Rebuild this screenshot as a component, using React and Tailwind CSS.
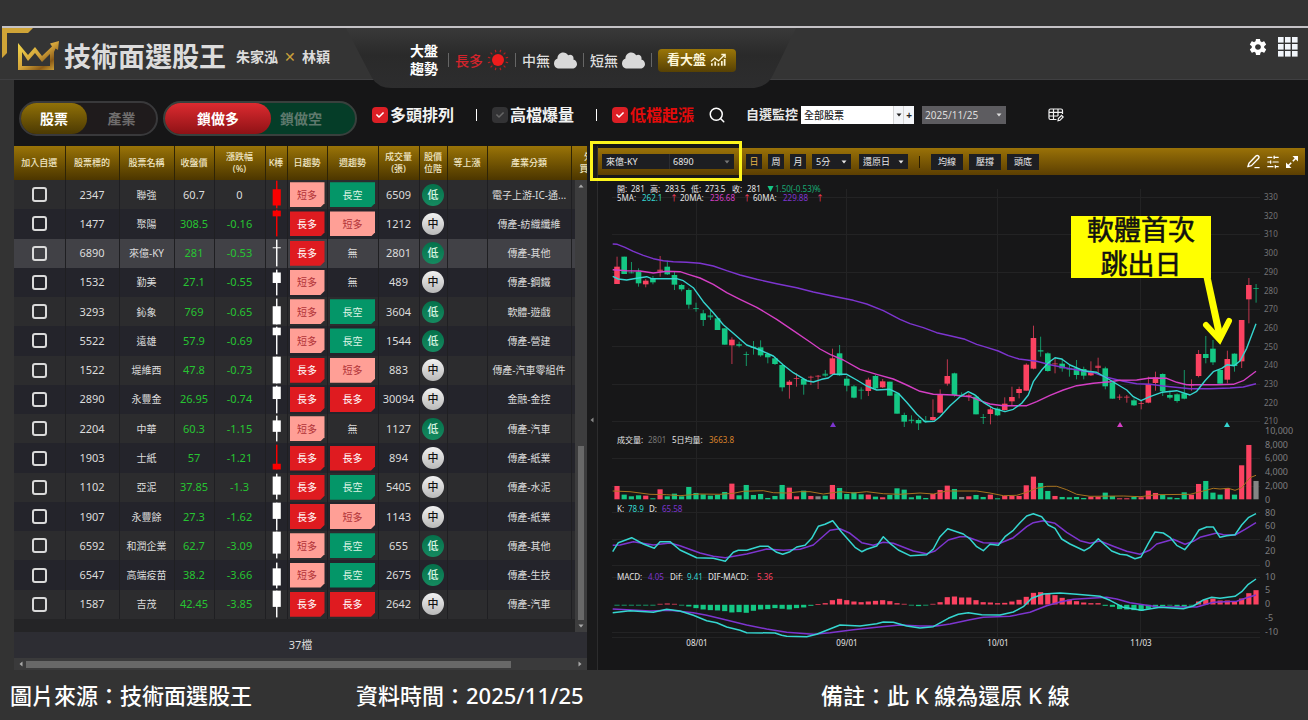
import React, { useState } from 'react';
import clsx from 'clsx';
import { FaCloud, FaCheck } from 'react-icons/fa';
import { IoMdSettings } from 'react-icons/io';
import { LuSearch, LuSlidersHorizontal } from 'react-icons/lu';

const columns = [
  { label: ['加入自選'], width: 51 },
  { label: ['股票標的'], width: 54 },
  { label: ['股票名稱'], width: 55 },
  { label: ['收盤價'], width: 40 },
  { label: ['漲跌幅', '(%)'], width: 51 },
  { label: ['K棒'], width: 22 },
  { label: ['日趨勢'], width: 40 },
  { label: ['週趨勢'], width: 51 },
  { label: ['成交量', '(張)'], width: 41 },
  { label: ['股價', '位階'], width: 28 },
  { label: ['等上漲'], width: 40 },
  { label: ['產業分類'], width: 84 },
  { label: ['外資', '買賣超'], width: 44 },
];

// candle: [body top, body height, wick top, wick bottom] inside a 22x29 cell
const stocks = [
  { id: '2347', name: '聯強', price: '60.7', change: '0', candle: [9, 17, 0, 29], up: true, day: '短多', week: '長空', volume: 6509, level: '低', industry: '電子上游-IC-通...' },
  { id: '1477', name: '聚陽', price: '308.5', change: '-0.16', candle: [1, 6, 0, 28], up: true, day: '長多', week: '短多', volume: 1212, level: '中', industry: '傳產-紡織纖維' },
  { id: '6890', name: '來億-KY', price: '281', change: '-0.53', candle: [8, 1, 0, 28], day: '長多', week: '無', volume: 2801, level: '低', industry: '傳產-其他', selected: true },
  { id: '1532', name: '勤美', price: '27.1', change: '-0.55', candle: [4, 11, 1, 28], day: '短多', week: '無', volume: 489, level: '中', industry: '傳產-鋼鐵' },
  { id: '3293', name: '鈊象', price: '769', change: '-0.65', candle: [9, 19, 1, 28], day: '短多', week: '長空', volume: 3604, level: '低', industry: '軟體-遊戲' },
  { id: '5522', name: '遠雄', price: '57.9', change: '-0.69', candle: [1, 8, 0, 29], day: '短多', week: '長空', volume: 1544, level: '低', industry: '傳產-營建' },
  { id: '1522', name: '堤維西', price: '47.8', change: '-0.73', candle: [0, 28, 0, 28], day: '長多', week: '短多', volume: 883, level: '中', industry: '傳產-汽車零組件' },
  { id: '2890', name: '永豐金', price: '26.95', change: '-0.74', candle: [1, 13, 0, 29], day: '長多', week: '長多', volume: 30094, level: '中', industry: '金融-金控' },
  { id: '2204', name: '中華', price: '60.3', change: '-1.15', candle: [6, 12, 1, 28], day: '短多', week: '無', volume: 1127, level: '低', industry: '傳產-汽車' },
  { id: '1903', name: '士紙', price: '57', change: '-1.21', candle: [20, 6, 0, 26], up: true, day: '長多', week: '長多', volume: 894, level: '中', industry: '傳產-紙業' },
  { id: '1102', name: '亞泥', price: '37.85', change: '-1.3', candle: [3, 19, 0, 27], day: '長多', week: '長空', volume: 5405, level: '中', industry: '傳產-水泥' },
  { id: '1907', name: '永豐餘', price: '27.3', change: '-1.62', candle: [0, 17, 0, 29], day: '長多', week: '短多', volume: 1143, level: '中', industry: '傳產-紙業' },
  { id: '6592', name: '和潤企業', price: '62.7', change: '-3.09', candle: [0, 23, 0, 28], day: '短多', week: '長空', volume: 655, level: '低', industry: '傳產-其他' },
  { id: '6547', name: '高端疫苗', price: '38.2', change: '-3.66', candle: [7, 18, 1, 28], day: '短多', week: '長空', volume: 2675, level: '低', industry: '傳產-生技' },
  { id: '1587', name: '吉茂', price: '42.45', change: '-3.85', candle: [0, 17, 0, 28], day: '長多', week: '長多', volume: 2642, level: '中', industry: '傳產-汽車' },
];

// all chart series are kept on a grid of one third of a chart unit
// daily candles: [up, body top, body bottom, wick top, wick bottom]
const candles = [
  [1, 110, 162, 80, 162], [0, 80, 132, 80, 132], [0, 127, 129, 96, 130], [0, 125, 160, 115, 170], [1, 152, 163, 147, 172],
  [0, 144, 157, 138, 163], [1, 119, 125, 78, 140], [0, 110, 133, 92, 135], [0, 135, 164, 125, 180], [0, 165, 178, 162, 184],
  [0, 180, 224, 175, 236], [0, 234, 237, 218, 245], [0, 250, 270, 240, 288], [0, 256, 262, 240, 270], [0, 265, 300, 265, 300],
  [0, 295, 344, 295, 344], [1, 329, 346, 322, 402], [0, 342, 348, 335, 352], [0, 372, 375, 365, 408], [0, 350, 354, 333, 374],
  [0, 352, 376, 331, 380], [0, 372, 382, 368, 400], [0, 385, 402, 380, 405], [0, 405, 472, 405, 484], [1, 455, 465, 450, 506],
  [1, 444, 446, 430, 470], [0, 447, 464, 445, 494], [1, 440, 443, 437, 465], [1, 437, 439, 435, 477], [0, 431, 437, 420, 440],
  [1, 385, 433, 356, 435], [0, 370, 436, 345, 438], [0, 446, 467, 438, 484], [0, 469, 503, 465, 505], [0, 479, 481, 472, 508],
  [1, 449, 483, 443, 498], [0, 438, 475, 435, 478], [1, 454, 472, 447, 474], [0, 455, 497, 455, 497], [0, 490, 551, 490, 551],
  [0, 555, 575, 548, 591], [0, 569, 573, 556, 580], [0, 570, 580, 565, 600], [0, 572, 574, 558, 578], [1, 561, 570, 508, 574],
  [1, 494, 548, 478, 550], [1, 438, 461, 388, 467], [0, 430, 495, 428, 500], [0, 494, 496, 487, 500], [1, 495, 497, 490, 513],
  [0, 500, 553, 495, 553], [0, 561, 563, 552, 582], [1, 538, 552, 530, 583], [0, 536, 556, 532, 558], [1, 521, 540, 502, 542],
  [1, 501, 514, 470, 527], [1, 477, 489, 470, 505], [1, 404, 482, 400, 482], [1, 324, 416, 287, 418], [0, 360, 365, 320, 380],
  [0, 370, 423, 367, 425], [1, 400, 403, 385, 430], [0, 401, 415, 385, 425], [0, 415, 419, 405, 440], [0, 415, 435, 390, 448],
  [0, 417, 437, 410, 448], [1, 424, 436, 394, 438], [1, 407, 414, 383, 430], [0, 415, 469, 410, 478], [0, 457, 506, 457, 506],
  [1, 500, 503, 493, 510], [1, 500, 503, 495, 518], [0, 511, 526, 505, 528], [1, 519, 522, 512, 538], [1, 462, 518, 440, 520],
  [1, 442, 459, 425, 482], [0, 432, 484, 430, 498], [0, 495, 503, 482, 508], [0, 493, 513, 490, 518], [0, 490, 506, 420, 508],
  [1, 463, 467, 448, 482], [1, 372, 438, 360, 442], [0, 372, 384, 318, 400], [0, 356, 397, 330, 405], [0, 420, 461, 420, 461],
  [1, 387, 449, 362, 460], [0, 371, 408, 370, 425], [1, 270, 394, 270, 414], [1, 165, 208, 144, 280], [0, 174, 177, 162, 218],
];

const volumes = [
  40, 14, 9, 12, 11, 3, 30, 9, 17, 9, 37, 19, 15, 11, 13, 22, 47, 12, 43, 13, 16, 4, 10, 43, 35, 9, 26, 10, 9, 11,
  43, 34, 16, 21, 15, 14, 8, 6, 13, 33, 29, 6, 11, 4, 16, 28, 41, 31, 7, 9, 13, 7, 14, 3, 10, 10, 10, 42, 68, 49,
  25, 10, 7, 6, 7, 4, 8, 8, 20, 10, 3, 3, 7, 6, 26, 19, 13, 6, 4, 21, 14, 46, 55, 20, 14, 34, 14, 102, 163, 55,
];

const macdBars = [
  -2, -2, -1, -2, -2, -1, 2, 3, 2, -2, -5, -10, -14, -16, -17, -19, -23, -22, -24, -18, -14, -13, -10, -12, -14, -10, -8, -3, 1, 4,
  13, 17, 13, 9, 7, 9, 11, 13, 10, 4, 2, -2, -4, -1, 2, 7, 22, 24, 21, 21, 13, 7, 6, 4, 5, 9, 14, 23, 35, 37,
  32, 28, 20, 15, 10, 6, 4, 4, -3, -6, -13, -14, -16, -18, -12, -8, -4, -2, -6, -6, -2, 9, 15, 18, 12, 12, 10, 18, 34, 43,
];

const series = {
  ma60: '38,42 52,43 75,52 100,64 130,76 160,86 190,92 220,95 260,97 300,100 340,108 380,122 420,135 470,148 530,161 590,173 640,186 700,199 760,211 800,222 850,242 900,268 930,281 970,293 1010,308 1050,317 1095,328 1130,343 1160,352 1195,363 1225,377 1257,387 1310,394 1350,404 1410,416 1450,423 1480,428 1520,442 1570,454 1610,461 1650,463 1690,468 1770,476 1830,476 1890,474 1930,471 1968,461',
  ma20: '38,119 80,122 120,123 160,129 200,124 240,125 265,133 300,144 340,163 380,188 420,208 470,232 530,268 580,302 630,336 660,357 690,373 730,390 780,418 830,433 880,447 920,465 960,484 1000,493 1060,495 1080,497 1110,500 1140,512 1170,522 1210,527 1280,527 1310,515 1350,496 1390,480 1430,467 1480,460 1530,455 1560,451 1610,450 1650,444 1700,445 1730,457 1760,464 1850,464 1900,463 1930,452 1968,424',
  ma5: '38,139 55,147 80,150 110,145 140,140 155,146 190,146 230,146 250,152 280,173 310,215 340,248 370,284 400,310 440,345 480,360 520,378 550,405 580,428 620,452 640,456 665,448 685,444 700,433 740,433 770,450 800,468 830,480 870,478 895,490 920,517 950,552 975,575 1003,574 1020,560 1050,527 1080,500 1105,485 1125,495 1150,517 1180,535 1215,545 1240,538 1265,520 1285,495 1300,455 1325,420 1345,398 1365,383 1385,387 1410,405 1450,422 1490,427 1520,444 1550,462 1580,480 1600,500 1623,512 1650,500 1685,487 1730,482 1770,495 1790,484 1815,452 1840,425 1865,415 1882,404 1902,407 1920,393 1940,355 1968,281',
  volMa: '38,198 90,200 150,208 200,209 240,212 300,207 360,208 400,205 430,199 490,197 520,203 560,204 600,200 630,200 670,207 720,200 760,204 800,200 850,206 900,208 960,204 1000,207 1040,198 1130,198 1170,204 1210,212 1250,211 1280,202 1310,190 1340,184 1370,184 1400,194 1430,208 1470,214 1570,213 1620,215 1670,209 1770,208 1810,198 1840,190 1860,192 1885,190 1905,196 1925,188 1950,158 1968,151',
  k: '38,380 55,353 95,338 130,357 163,370 180,350 210,350 240,375 290,398 340,400 376,409 400,382 415,376 440,376 480,364 505,364 530,382 548,388 570,380 590,366 615,361 635,340 655,304 675,298 698,287 725,322 765,367 785,380 800,373 830,363 850,335 870,355 895,375 930,392 980,389 1000,372 1020,335 1043,311 1090,327 1110,342 1130,365 1150,377 1170,358 1195,361 1215,335 1240,316 1260,293 1280,273 1300,266 1325,275 1345,300 1365,310 1385,342 1410,357 1453,377 1470,367 1495,341 1515,360 1535,378 1560,388 1580,390 1605,401 1623,396 1645,355 1665,321 1690,324 1710,337 1730,361 1754,374 1775,349 1797,315 1820,306 1840,306 1860,337 1880,332 1905,329 1925,300 1945,278 1968,266',
  d: '38,361 60,360 100,350 160,360 210,354 240,362 300,384 340,394 376,398 440,387 500,372 550,376 600,373 640,360 690,316 720,311 750,325 785,353 820,361 850,352 880,355 940,378 980,386 1005,378 1045,345 1080,335 1100,335 1150,353 1200,355 1240,338 1280,305 1300,293 1330,287 1365,295 1400,322 1440,347 1470,355 1500,348 1540,364 1580,379 1620,388 1650,375 1670,357 1720,343 1755,358 1780,349 1800,337 1850,324 1870,329 1905,330 1935,313 1968,293',
  dif: '38,563 90,557 160,562 200,553 240,558 280,571 320,587 350,593 380,606 420,616 440,623 525,624 545,631 560,634 620,635 650,628 680,616 720,600 780,603 830,596 850,591 880,592 920,603 960,609 1000,605 1045,580 1075,568 1105,563 1145,569 1200,570 1240,561 1270,545 1295,520 1330,507 1380,504 1430,508 1500,514 1530,526 1570,547 1625,556 1680,547 1750,551 1780,543 1810,525 1835,517 1860,520 1905,514 1925,500 1945,478 1968,462',
  macd: '38,552 150,558 210,556 280,563 320,571 370,583 440,600 500,612 560,622 640,628 690,623 760,614 830,607 900,600 960,603 1010,603 1050,597 1110,584 1150,577 1230,574 1290,562 1340,542 1380,531 1420,523 1520,517 1550,522 1590,533 1670,545 1790,546 1840,532 1910,529 1940,518 1968,510',
};

const scaleX = (v) => 2 + v / 3;
const priceY = (v) => 55 + v / 3;
const lowerY = (v) => 250 + v / 3;
const candleX = (i) => 19 + i * 7.18;

const toPoints = (text, scaleY) =>
  text
    .split(' ')
    .map((pair) => {
      const [x, y] = pair.split(',').map(Number);
      return `${scaleX(x).toFixed(1)},${scaleY(y).toFixed(1)}`;
    })
    .join(' ');

const RED = '#fb4261';
const GREEN = '#14c784';
const CYAN = '#35d6d0';
const PURPLE = '#7d35cf';
const PINK = '#d43fc4';

const axisLabels = [
  ...Array.from({ length: 13 }, (_, i) => [330 - i * 10, 22 + i * 18.7]),
  ['10,000', 256], ['8,000', 270], ['6,000', 283], ['4,000', 297], ['2,000', 311], ['0', 325],
  ['80', 338], ['60', 351], ['40', 364], ['20', 376], ['0', 389],
  ['10', 402], ['5', 415], ['0', 429], ['-5', 443], ['-10', 457],
];

const gridLines = [22, 59, 97, 134, 171, 209, 246, 283, 311, 337, 364, 390, 402, 457, 462];

function Crown() {
  return (
    <svg viewBox="0 0 42 32" className="h-8 w-[42px]" aria-hidden="true">
      <defs>
        <linearGradient id="crown" x1="0" y1="0" x2="1" y2="1">
          <stop offset="0" stopColor="#f5dc4e" />
          <stop offset="0.5" stopColor="#d3a33a" />
          <stop offset="0.75" stopColor="#8a5a17" />
          <stop offset="1" stopColor="#e0b43f" />
        </linearGradient>
      </defs>
      <path d="M0 2L10 14L17 6L24 15L34 5.500L32 2.500L41 0L40 9L37.500 7.500L36 11V29H0Z M4 11V25H32V13L24 21L17 12L10 20Z" fill="url(#crown)" fillRule="evenodd" />
    </svg>
  );
}

function Sun() {
  return (
    <svg viewBox="0 0 22 22" className="h-[22px] w-[22px]" aria-hidden="true">
      <circle cx="11" cy="11" r="6" fill="#ee1c1c" />
      {Array.from({ length: 12 }, (_, i) => (
        <path key={i} d="M11 0.5V3" stroke="#b32020" strokeWidth="1.2" transform={`rotate(${i * 30 + 15} 11 11)`} />
      ))}
    </svg>
  );
}

function TrendIcon() {
  return (
    <svg viewBox="0 0 18 14" className="h-3.5 w-[17px]" fill="none" stroke="#fdf6d8" aria-hidden="true">
      <path d="M1 8.5L5 5L9 8L15.5 1.5M12 1.2H16V5" strokeWidth="1.4" />
      <path d="M2 13V10.5M5.5 13V8.5M9 13V10.5M12.5 13V8M15.5 13V6" strokeWidth="1.8" />
    </svg>
  );
}

function TableEditIcon() {
  return (
    <svg viewBox="0 0 16 14" className="h-3.5 w-4" fill="none" stroke="#f2f2f2" strokeWidth="1.2" aria-hidden="true">
      <path d="M8.5 11.5H2.5A1.5 1.5 0 0 1 1 10V2.5A1.5 1.5 0 0 1 2.5 1H13A1.5 1.5 0 0 1 14.500 2.500V6M1 4.300H14.500M1 8H10M5.500 1V11.500M10 1V8" />
      <path d="M10 12.800L10.400 10.600L13.600 7.400L15.200 9L12 12.300Z" />
    </svg>
  );
}

function PenIcon() {
  return (
    <svg viewBox="0 0 16 16" className="h-[15px] w-[15px]" fill="none" stroke="#fff" strokeWidth="1.5" strokeLinejoin="round" aria-hidden="true">
      <path d="M2 13.500L3.200 9.800L10.600 2.200Q12 1 13.300 2.200Q14.500 3.500 13.300 4.800L5.800 12.400Z" />
      <path d="M9 14.500H14.500" strokeWidth="1.300" />
    </svg>
  );
}

function ExpandIcon() {
  return (
    <svg viewBox="0 0 14 14" className="h-3.5 w-3.5" aria-hidden="true">
      <path d="M2 12L12 2" stroke="#fff" strokeWidth="1.600" strokeDasharray="6 2.200" />
      <path d="M13 1V6.500L7.500 1ZM1 13V7.500L6.500 13Z" fill="#fff" />
    </svg>
  );
}

function Caret({ className }) {
  return (
    <svg viewBox="0 0 6 4" className={clsx('pointer-events-none h-1 w-1.5', className)} aria-hidden="true">
      <path d="M0.500 0.500H5.500L3 3.500Z" fill="currentColor" />
    </svg>
  );
}

function MarketTrend() {
  return (
    <section className="relative z-10 flex h-[60px] w-[450px] items-center pt-1 pl-16 text-[14px] font-medium text-white">
      <svg viewBox="0 0 450 60" preserveAspectRatio="none" className="absolute inset-0 -z-10 h-full w-full" aria-hidden="true">
        <defs>
          <linearGradient id="hang" x1="0" y1="0" x2="0" y2="1">
            <stop offset="0" stopColor="#393939" />
            <stop offset="0.45" stopColor="#2a2a2a" />
            <stop offset="1" stopColor="#2d2d2e" />
          </linearGradient>
        </defs>
        <path d="M0 0H450L427 47Q421 60 404 60H46Q32 60 26 50Z" fill="url(#hang)" />
      </svg>
      <h2 className="text-[14px] leading-[18px] font-bold">大盤<br />趨勢</h2>
      <i className="mr-1.5 ml-2.5 h-3.5 w-px bg-[#666]" />
      <span className="text-[#d3242c]">長多</span>
      <span className="ml-1"><Sun /></span>
      <i className="mx-1.5 h-3.5 w-px bg-[#666]" />
      <span className="text-[#ddd]">中無</span>
      <FaCloud className="ml-1 h-[23px] w-[23px] text-[#d9d9d9]" />
      <i className="mx-1.5 h-3.5 w-px bg-[#666]" />
      <span className="text-[#ddd]">短無</span>
      <FaCloud className="ml-1 h-[23px] w-[23px] text-[#d9d9d9]" />
      <i className="mx-1.5 h-3.5 w-px bg-[#666]" />
      <button type="button" className="flex h-[23px] w-[78px] items-center justify-center gap-1 rounded bg-gradient-to-b from-[#9a7608] to-[#574104] text-[13px] font-bold text-[#fdf6d8]">
        看大盤 <TrendIcon />
      </button>
    </section>
  );
}

function Header() {
  return (
    <header className="relative flex h-[52px] items-start border-b border-[#3f3f41] bg-[#343434]">
      <svg viewBox="0 0 32 32" className="absolute top-0 left-0.5 h-8 w-8" aria-hidden="true">
        <path d="M0 0H31L26 5H5V25L0 30Z" fill="#cfa437" />
      </svg>
      <div className="flex h-full w-[346px] shrink-0 items-center pt-1.5 pl-[18px]">
        <Crown />
        <h1 className="ml-1 text-[27px] leading-8 font-bold whitespace-nowrap text-[#dcdcdc]">技術面選股王</h1>
        <p className="ml-2.5 flex gap-1.5 text-[14px] font-bold whitespace-nowrap text-[#dcdcdc]">
          朱家泓 <span className="font-normal text-[#c9a03a]">✕</span> 林穎
        </p>
      </div>
      <MarketTrend />
      <div className="ml-auto flex gap-2.5 pt-[9px] pr-2.5">
        <button type="button" aria-label="設定"><IoMdSettings className="h-5 w-5 text-white" /></button>
        <button type="button" aria-label="選單">
          <svg viewBox="0 0 20 20" className="h-5 w-5" fill="#f1f5fa" aria-hidden="true">
            {[0, 7, 14].map((y) => [0, 7, 14].map((x) => <rect key={`${x}-${y}`} x={x} y={y} width="5.600" height="5.600" />))}
          </svg>
        </button>
      </div>
    </header>
  );
}

function FilterCheck({ id, label, checked, onChange, disabled, highlight }) {
  return (
    <div className="flex items-center gap-0.5">
      <span className="grid">
        <input
          id={id}
          type="checkbox"
          checked={checked}
          onChange={onChange}
          className={clsx('col-start-1 row-start-1 h-4 w-4 appearance-none rounded-sm', disabled ? 'bg-[#333335]' : 'bg-[#dc1f25]')}
        />
        <FaCheck className={clsx('pointer-events-none col-start-1 row-start-1 h-2 w-2 place-self-center', disabled ? 'text-[#666]' : 'text-white', !checked && 'hidden')} />
      </span>
      <label htmlFor={id} className={clsx('text-[16px] leading-5 font-bold whitespace-nowrap', highlight ? 'text-[#e30b0b]' : 'text-[#f2f2f2]')}>
        {label}
      </label>
    </div>
  );
}

function Toolbar() {
  const [filters, setFilters] = useState({ bull: true, burst: true, low: true });
  const toggle = (key) => setFilters((prev) => ({ ...prev, [key]: !prev[key] }));

  return (
    <div className="flex h-[66px] items-start pt-[21px] pl-[5px]">
      <div className="flex h-[35px] w-[139px] rounded-full border-2 border-[#39393b] bg-[#1f1b1c] text-[14px] font-bold">
        <button type="button" className="h-full w-[66px] rounded-full bg-gradient-to-b from-[#917108] to-[#4c3a03] text-white">股票</button>
        <button type="button" className="flex-1 text-[#6f6d6d]">產業</button>
      </div>
      <div className="ml-[5px] flex h-[35px] w-[194px] rounded-full border-2 border-[#39403d] bg-[#053d28] text-[14px] font-bold">
        <button type="button" className="h-full w-[106px] rounded-full bg-gradient-to-b from-[#dd2b30] to-[#8f1216] text-white">鎖做多</button>
        <button type="button" className="flex-1 pr-6 text-[#5f796d]">鎖做空</button>
      </div>
      <div className="mt-0.5 ml-[15px] flex h-6 items-center">
        <FilterCheck id="bull" label="多頭排列" checked={filters.bull} onChange={() => toggle('bull')} />
        <i className="mr-[15px] ml-[22px] h-3 w-px bg-white" />
        <FilterCheck id="burst" label="高檔爆量" checked={filters.burst} onChange={() => toggle('burst')} disabled />
        <i className="mr-[15px] ml-[22px] h-3 w-px bg-white" />
        <FilterCheck id="low" label="低檔起漲" checked={filters.low} onChange={() => toggle('low')} highlight />
        <button type="button" aria-label="搜尋" className="ml-3.5"><LuSearch className="h-[18px] w-[18px] text-white" /></button>
        <label htmlFor="watch" className="ml-5 text-[13px] font-bold whitespace-nowrap text-[#e6e6e6]">自選監控</label>
        <div className="ml-[3px] flex h-[18px] items-center bg-white text-[#222]">
          <select id="watch" className="h-full w-[92px] appearance-none px-[3px] text-[10px] leading-3 font-medium text-[#222]">
            <option>全部股票</option>
          </select>
          <span className="flex h-full w-2.5 items-center justify-center border-l border-[#d5d5d5] bg-[#f3f5f8]"><Caret /></span>
          <button type="button" aria-label="新增" className="h-full w-[11px] border-l border-[#d5d5d5] bg-[#f3f5f8] text-[10px] leading-4 font-bold">+</button>
        </div>
        <div className="ml-2 flex h-[18px] w-[84px] items-center bg-[#5d5c60] pr-1 text-[#ddd]">
          <select aria-label="日期" className="h-full flex-1 appearance-none px-[3px] text-[10px] leading-3">
            <option>2025/11/25</option>
          </select>
          <Caret />
        </div>
        <button type="button" aria-label="編輯欄位" className="ml-[42px]"><TableEditIcon /></button>
      </div>
    </div>
  );
}

function TrendTag({ value, wide }) {
  if (value === '無') {
    return <span className="text-[#ddd]">無</span>;
  }
  return (
    <span
      className={clsx(
        'mx-auto flex h-[25px] items-center justify-center text-[10px] [clip-path:polygon(0_0,100%_0,100%_21px,calc(100%-4px)_100%,0_100%)]',
        wide ? 'w-[45px]' : 'w-[35px]',
        {
          'bg-[#df1b20] text-white': value === '長多',
          'bg-[#ff9f96] text-[#b13236]': value === '短多',
          'bg-[#049668] text-[#def3e4]': value === '長空',
        }
      )}
    >
      {value}
    </span>
  );
}

function CandleCell({ candle, up }) {
  const [top, height, wickTop, wickBottom] = candle;
  const color = up ? '#fb0000' : '#fff';
  return (
    <svg viewBox="0 0 22 29" className="block h-[29px] w-full" fill={color} aria-hidden="true">
      <rect x="10.500" y={wickTop} width="1.500" height={wickBottom - wickTop} />
      <rect x="7" y={top} width="8.500" height={height} />
    </svg>
  );
}

function StockTable() {
  return (
    <section className="relative flex min-w-0 flex-col overflow-hidden bg-[#242426]">
      <table className="h-[473px] w-[601px] table-fixed border-collapse text-center text-[10px] leading-3 text-[#dcdcdc]">
        <colgroup>
          {columns.map((col) => <col key={col.label[0]} style={{ width: col.width }} />)}
        </colgroup>
        <thead>
          <tr className="bg-gradient-to-b from-[#9a7408] to-[#4c3600]">
            {columns.map((col) => (
              <th key={col.label[0]} className="h-[34px] border-r border-[#2f2405] p-0 text-[9px] font-medium whitespace-nowrap text-[#f0e6c4]">
                {col.label.map((line) => <span key={line} className="block">{line}</span>)}
              </th>
            ))}
          </tr>
        </thead>
        <tbody>
          {stocks.map((row, index) => (
            <tr key={row.id} className={row.selected ? 'bg-[#414146]' : index % 2 === 0 ? 'bg-[#2c2c2e]' : 'bg-[#24242b]'}>
              <td className="border-r border-[#1f1f22] p-0">
                <input type="checkbox" aria-label={`加入自選 ${row.name}`} className="mx-auto block h-[15px] w-[15px] appearance-none rounded-[3px] border-2 border-[#dadada]" />
              </td>
              <td className="border-r border-[#1f1f22] p-0 text-[11px]">{row.id}</td>
              <td className="border-r border-[#1f1f22] p-0 whitespace-nowrap">{row.name}</td>
              <td className={clsx('border-r border-[#1f1f22] p-0 text-[11px]', row.change !== '0' && 'text-[#27c432]')}>{row.price}</td>
              <td className={clsx('border-r border-[#1f1f22] p-0 text-[11px]', row.change !== '0' && 'text-[#27c432]')}>{row.change}</td>
              <td className="border-r border-[#1f1f22] p-0"><CandleCell candle={row.candle} up={row.up} /></td>
              <td className="border-r border-[#1f1f22] p-0"><TrendTag value={row.day} /></td>
              <td className="border-r border-[#1f1f22] p-0"><TrendTag value={row.week} wide /></td>
              <td className="border-r border-[#1f1f22] p-0 text-[11px]">{row.volume}</td>
              <td className="border-r border-[#1f1f22] p-0">
                <span
                  className={clsx(
                    'mx-auto flex h-[22px] w-[22px] items-center justify-center rounded-full text-[11px] font-medium',
                    row.level === '低' ? 'bg-gradient-to-b from-[#05714b] to-[#158a60] text-[#d9f5e2]' : 'bg-gradient-to-b from-[#f2f2f2] to-[#b9b9b9] text-[#111]'
                  )}
                >
                  {row.level}
                </span>
              </td>
              <td className="border-r border-[#1f1f22] p-0" />
              <td className="border-r border-[#1f1f22] p-0 whitespace-nowrap">{row.industry}</td>
              <td className="p-0" />
            </tr>
          ))}
        </tbody>
      </table>
      <div className="h-[13px]" />
      <p className="flex h-[26px] items-center justify-center bg-[#2d2d33] text-[11px] text-[#ddd]">37檔</p>
      <div className="flex h-3 items-center bg-[#3a3a3b] px-1 text-[#aaa]">
        <Caret className="rotate-90" />
        <span className="ml-0.5 h-[7px] w-[485px] bg-[#686868]" />
        <Caret className="ml-auto -rotate-90" />
      </div>
      {/* vertical scroll bar */}
      <div className="absolute top-[34px] right-0 bottom-[38px] flex w-3 flex-col items-center bg-[#3d3d3e] py-1 text-[#aaa]">
        <Caret className="rotate-180" />
        <span className="mt-auto mb-1 h-[174px] w-1.5 bg-[#686868]" />
        <Caret />
      </div>
    </section>
  );
}

function Chart() {
  return (
    <svg viewBox="0 0 707 492" className="w-full" fontFamily="'Noto Sans', 'Noto Sans CJK TC', sans-serif" role="img" aria-label="來億-KY 還原日 K 線圖">
      <g stroke="#232324">
        {gridLines.map((y) => <path key={y} d={`M14 ${y}.500H662`} />)}
        {[98, 248, 399, 542].map((x) => <path key={x} d={`M${x}.500 14V462`} />)}
      </g>

      <g fill="#737375" fontSize="8">
        {axisLabels.slice(0, 13).map(([label, y]) => <text key={label} x="666" y={y + 3}>{label}</text>)}
      </g>
      <g fill="#7d7d7f" fontSize="9">
        {axisLabels.slice(13).map(([label, y]) => <text key={y} x="667" y={y + 3}>{label}</text>)}
      </g>
      <g fill="#e6e6e6" fontSize="8" textAnchor="middle">
        <text x="99" y="471">08/01</text>
        <text x="249" y="471">09/01</text>
        <text x="400" y="471">10/01</text>
        <text x="543" y="471">11/03</text>
      </g>

      {/* price */}
      {candles.map(([up, top, bottom, high, low], i) => (
        <g key={i} fill={up ? RED : GREEN}>
          <rect x={candleX(i) - 0.4} y={priceY(high)} width="0.9" height={(low - high) / 3} opacity="0.8" />
          <rect x={candleX(i) - 2.8} y={priceY(top)} width="5.6" height={Math.max((bottom - top) / 3, 1)} opacity={bottom - top < 8 ? 0.7 : 1} />
        </g>
      ))}
      <g fill="none" strokeWidth="1.4" strokeLinejoin="round">
        <polyline points={toPoints(series.ma60, priceY)} stroke={PURPLE} />
        <polyline points={toPoints(series.ma20, priceY)} stroke={PINK} />
        <polyline points={toPoints(series.ma5, priceY)} stroke={CYAN} />
      </g>
      <path d="M232 252L235 247L238 252Z" fill={PURPLE} />
      <path d="M519 252L522 247L525 252Z" fill={PINK} />
      <path d="M626 252L629 247L632 252Z" fill={CYAN} />

      {/* volume */}
      {volumes.map((v, i) => (
        <rect key={i} x={candleX(i) - 2.6} y={324.3 - v / 3} width="5.2" height={v / 3} fill={i === 89 || i === 28 || i === 48 ? '#858585' : candles[i][0] ? RED : GREEN} />
      ))}
      <polyline points={toPoints(series.volMa, lowerY)} fill="none" stroke="#a8731f" strokeWidth="1" />

      {/* KD */}
      <g fill="none" strokeWidth="1.5" strokeLinejoin="round">
        <polyline points={toPoints(series.d, lowerY)} stroke={PURPLE} />
        <polyline points={toPoints(series.k, lowerY)} stroke={CYAN} />
      </g>

      {/* MACD */}
      {macdBars.map((v, i) => (
        <rect key={i} x={candleX(i) - 2.6} y={v > 0 ? 429.5 - v / 3 : 429.8} width="5.2" height={Math.max(Math.abs(v) / 3, 0.7)} fill={v > 0 ? RED : GREEN} />
      ))}
      <g fill="none" strokeWidth="1.5" strokeLinejoin="round">
        <polyline points={toPoints(series.macd, lowerY)} stroke={PURPLE} />
        <polyline points={toPoints(series.dif, lowerY)} stroke={CYAN} />
      </g>

      {/* legends */}
      <g fill="#e6e6e6" fontSize="8">
        <text y="17">
          <tspan x="19">開:</tspan><tspan x="33">281</tspan><tspan x="52">高:</tspan><tspan x="67">283.5</tspan>
          <tspan x="93">低:</tspan><tspan x="107">273.5</tspan><tspan x="134">收:</tspan><tspan x="149">281</tspan>
          <tspan x="177" fill="#17a974">1.50(-0.53)%</tspan>
        </text>
        <path d="M169.500 11H175.500L172.500 17Z" fill={GREEN} />
        <text y="26">
          <tspan x="19">5MA:</tspan><tspan x="44" fill={CYAN}>262.1</tspan><tspan x="72" fill={RED}>↑</tspan>
          <tspan x="82">20MA:</tspan><tspan x="112" fill={PINK}>236.68</tspan><tspan x="145" fill={RED}>↑</tspan>
          <tspan x="155">60MA:</tspan><tspan x="185" fill={PURPLE}>229.88</tspan><tspan x="218" fill={RED}>↑</tspan>
        </text>
        <text y="268">
          <tspan x="19">成交量:</tspan><tspan x="50" fill="#777">2801</tspan><tspan x="74">5日均量:</tspan><tspan x="111" fill="#d9822b">3663.8</tspan>
        </text>
        <text y="337">
          <tspan x="19">K:</tspan><tspan x="30" fill={CYAN}>78.9</tspan><tspan x="51">D:</tspan><tspan x="64" fill={PURPLE}>65.58</tspan>
        </text>
        <text y="405">
          <tspan x="19">MACD:</tspan><tspan x="50" fill={PURPLE}>4.05</tspan><tspan x="72">Dif:</tspan><tspan x="89" fill={CYAN}>9.41</tspan>
          <tspan x="110">DIF-MACD:</tspan><tspan x="159" fill={RED}>5.36</tspan>
        </text>
      </g>

      {/* note on the first signal day */}
      <rect x="473" y="41" width="140" height="62" fill="#ff0" />
      <g fill="#111" stroke="#111" strokeWidth="0.6" fontSize="27" textAnchor="middle" fontFamily="'Noto Sans CJK TC', sans-serif">
        <text x="543" y="65">軟體首次</text>
        <text x="543" y="99">跳出日</text>
      </g>
      <g fill="none" stroke="#ff0" strokeLinecap="round">
        <path d="M609 102L622 162" strokeWidth="7" strokeLinecap="butt" />
        <path d="M608 150L621.500 164.500L631 146" strokeWidth="6" strokeLinejoin="miter" />
      </g>
    </svg>
  );
}

function ChartPanel() {
  return (
    <section className="relative flex min-w-0 flex-col border-l border-[#2c2c2d] bg-[#171718]">
      <div className="mt-0.5 flex h-[27px] items-center bg-gradient-to-b from-[#9a7208] to-[#5c3f02] pr-1.5 pl-1 text-[9px] leading-3 text-[#e6e6e6]">
        <div className="flex h-[15px] w-[132px] items-center bg-[#1d1e22] pr-1">
          <input aria-label="股票名稱" defaultValue="來億-KY" className="h-full w-[67px] px-1 outline-none" />
          <select aria-label="股票標的" className="h-full flex-1 appearance-none border-l border-[#2c2d31] px-[3px]">
            <option>6890</option>
          </select>
          <Caret className="text-[#777]" />
        </div>
        <div className="ml-3 flex gap-1.5">
          <button type="button" className="h-[15px] w-4 bg-[#1d1e22] text-[#e9b549]">日</button>
          <button type="button" className="h-[15px] w-4 bg-[#1d1e22]">周</button>
          <button type="button" className="h-[15px] w-4 bg-[#1d1e22]">月</button>
        </div>
        <div className="ml-1.5 flex h-[15px] w-[39px] items-center bg-[#1d1e22] pr-1">
          <select aria-label="分鐘" className="h-full w-[29px] appearance-none pl-1"><option>5分</option></select>
          <Caret />
        </div>
        <div className="ml-2 flex h-[15px] w-[49px] items-center bg-[#1d1e22] pr-1">
          <select aria-label="還原" className="h-full w-[39px] appearance-none pl-1"><option>還原日</option></select>
          <Caret />
        </div>
        <i className="mr-[11px] ml-[11px] h-3 w-px bg-[#2a1c00]" />
        <div className="flex gap-1.5">
          <button type="button" className="h-4 w-8 bg-[#1d1e22]">均線</button>
          <button type="button" className="h-4 w-8 bg-[#1d1e22]">壓撐</button>
          <button type="button" className="h-4 w-8 bg-[#1d1e22]">頭底</button>
        </div>
        <div className="ml-auto flex items-center gap-[5px]">
          <button type="button" aria-label="畫線"><PenIcon /></button>
          <button type="button" aria-label="參數"><LuSlidersHorizontal className="h-3.5 w-3.5 text-white" /></button>
          <button type="button" aria-label="放大"><ExpandIcon /></button>
        </div>
      </div>
      <Chart />
      <div className="pointer-events-none absolute -top-[5px] -left-2 h-10 w-[152px] border-[3px] border-[#fdf51c]" />
    </section>
  );
}

export default function App() {
  return (
    <div className="flex min-h-screen flex-col bg-[#333] font-['Noto_Sans','Noto_Sans_CJK_TC',sans-serif]">
      <div className="h-[26px]" />
      <div className="ml-0.5 h-0.5 bg-[#c4c2c6]" />
      <Header />
      <main className="ml-3.5 bg-[#161617]">
        <Toolbar />
        <div className="grid grid-cols-[573fr_10fr_708fr] pr-[3px]">
          <StockTable />
          <div className="flex items-center justify-center bg-[#1a1a1b] pt-6 text-[#888]"><Caret className="rotate-90" /></div>
          <ChartPanel />
        </div>
      </main>
      <footer className="grid grow grid-cols-[346fr_465fr_477fr] items-center px-2.5 text-[22px] leading-8 font-medium text-white">
        <p>圖片來源：技術面選股王</p>
        <p>資料時間：2025/11/25</p>
        <p>備註：此 K 線為還原 K 線</p>
      </footer>
    </div>
  );
}
